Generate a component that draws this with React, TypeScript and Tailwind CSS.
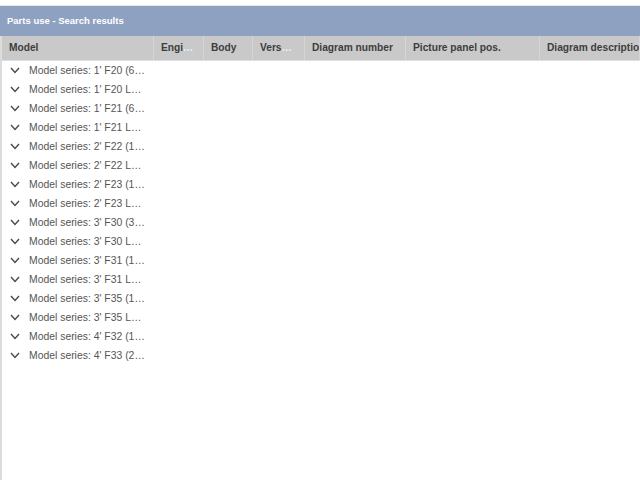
const columns = [
  { label: "Model", width: "w-[152px]", cut: false },
  { label: "Engi", width: "w-[50px]", cut: true },
  { label: "Body", width: "w-[49px]", cut: false },
  { label: "Vers", width: "w-[52px]", cut: true },
  { label: "Diagram number", width: "w-[101px]", cut: false },
  { label: "Picture panel pos.", width: "w-[134px]", cut: false },
  { label: "Diagram description", width: "flex-1", cut: false },
];

const rows = [
  "1' F20 (6",
  "1' F20 L",
  "1' F21 (6",
  "1' F21 L",
  "2' F22 (1",
  "2' F22 L",
  "2' F23 (1",
  "2' F23 L",
  "3' F30 (3",
  "3' F30 L",
  "3' F31 (1",
  "3' F31 L",
  "3' F35 (1",
  "3' F35 L",
  "4' F32 (1",
  "4' F33 (2",
];

// small expand arrow in front of each model row
const Chevron = () => (
  <svg width="10" height="7" viewBox="0 0 10 7" className="ml-[8px] shrink-0">
    <polyline points="1,1 5,5.5 9,1" fill="none" stroke="#4a4a4a" strokeWidth="1.4" />
  </svg>
);

const App = () => {
  return (
    <div className="w-[640px] h-[480px] bg-white flex flex-col overflow-hidden font-['Liberation_Sans',Arial,sans-serif]">
      <div className="h-[6px] bg-white border-b border-[#e4e6ea]" />
      <div className="h-[30px] bg-[#8fa1c0] flex items-center px-[7px]">
        <span className="text-white text-[9.5px] font-bold">Parts use - Search results</span>
      </div>
      <div className="flex-1 flex flex-col border-l-2 border-[#dcdcdc]">
        <div className="h-[25px] bg-[#c9c9c9] flex border-b border-[#dedede]">
          {columns.map((c) => (
            <div
              key={c.label}
              className={`${c.width} flex items-center pl-[7px] border-r border-[#d6d6d6] whitespace-nowrap overflow-hidden text-[10.2px] font-bold text-[#3d3d3d]`}
            >
              {c.label}
              {c.cut && <span className="text-[#f2f2f2]">…</span>}
            </div>
          ))}
        </div>
        <div className="flex flex-col">
          {rows.map((r) => (
            <div key={r} className="h-[19px] flex items-center">
              <Chevron />
              <span className="ml-[9px] text-[10.4px] text-[#555555] whitespace-nowrap">
                Model series: {r}…
              </span>
            </div>
          ))}
        </div>
      </div>
    </div>
  );
};

export default App;
